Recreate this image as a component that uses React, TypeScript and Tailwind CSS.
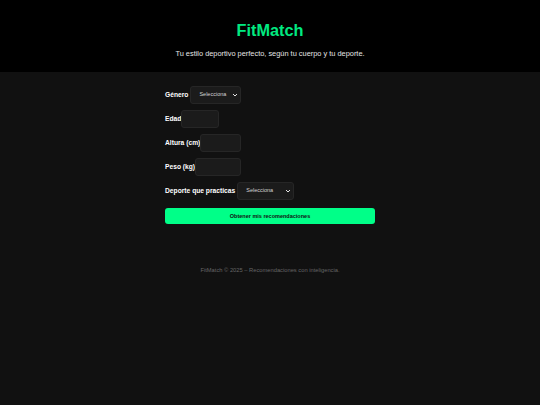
import React from "react"

const font = { fontFamily: '"Liberation Sans", Arial, sans-serif' }

function Chevron() {
  return (
    <svg width="6" height="4" viewBox="0 0 6 4" className="pointer-events-none absolute right-[3px] top-[7px]">
      <path d="M1 1 L3 3 L5 1" fill="none" stroke="#e5e5e5" strokeWidth="1" />
    </svg>
  )
}

function Select({ width }: { width: string }) {
  return (
    <div className={`relative ml-[2px] h-[18px] ${width}`}>
      <select
        className="block h-[18px] w-full appearance-none rounded-[3px] border border-[#262626] bg-[#1b1b1b] py-0 pl-[8px] text-[5.5px] leading-none text-[#d4d4d4] outline-none"
        defaultValue=""
      >
        <option value="">Selecciona</option>
      </select>
      <Chevron />
    </div>
  )
}

function Field({ width }: { width: string }) {
  return <input className={`block h-[18px] ${width} rounded-[3px] border border-[#262626] bg-[#1b1b1b] outline-none`} />
}

export default function App() {
  return (
    <div className="min-h-screen bg-[#111111] antialiased" style={font}>
      <header className="flex h-[72px] flex-col items-center bg-black pt-[22px]">
        <h1 className="text-[16.3px] font-bold leading-none text-[#00e980]">FitMatch</h1>
        <p className="mt-[12px] text-[7.4px] leading-none text-[#e5e5e5]">
          Tu estilo deportivo perfecto, según tu cuerpo y tu deporte.
        </p>
      </header>

      <main className="mx-auto flex w-[210px] flex-col gap-[6px] pt-[14px]">
        <div className="flex h-[18px] items-center">
          <label className="text-[6.7px] font-bold leading-none text-white">Género</label>
          <Select width="w-[51px]" />
        </div>
        <div className="flex h-[18px] items-center">
          <label className="text-[6.7px] font-bold leading-none text-white">Edad</label>
          <Field width="w-[38px]" />
        </div>
        <div className="flex h-[18px] items-center">
          <label className="text-[6.7px] font-bold leading-none text-white">Altura (cm)</label>
          <Field width="w-[41px]" />
        </div>
        <div className="flex h-[18px] items-center">
          <label className="text-[6.7px] font-bold leading-none text-white">Peso (kg)</label>
          <Field width="w-[46px]" />
        </div>
        <div className="flex h-[18px] items-center">
          <label className="text-[6.7px] font-bold leading-none text-white">Deporte que practicas</label>
          <Select width="w-[57px]" />
        </div>
        <button className="mt-[2px] h-[16px] w-full rounded-[3px] bg-[#00ff88] text-[5.5px] font-bold text-[#111111]">
          Obtener mis recomendaciones
        </button>
      </main>

      <footer className="mt-[42px] text-center text-[5.75px] text-[#666666]">
        FitMatch © 2025 – Recomendaciones con inteligencia.
      </footer>
    </div>
  )
}
